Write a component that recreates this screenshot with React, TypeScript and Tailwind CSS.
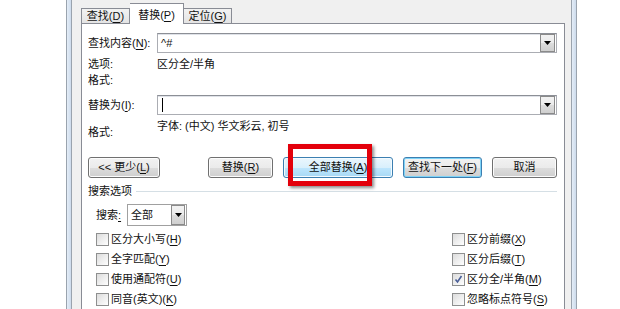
import React from 'react';

const U: React.FC<{ children: React.ReactNode }> = ({ children }) => (
  <span className="underline underline-offset-2">{children}</span>
);

const Arrow = () => (
  <svg width="7" height="4" viewBox="0 0 7 4" className="block">
    <path d="M0 0h7L3.5 4z" fill="#000" />
  </svg>
);

const DropBtn: React.FC<{ className?: string }> = ({ className = '' }) => (
  <div
    className={`flex items-center justify-center border border-[#8a8a8a] bg-[linear-gradient(to_bottom,#f2f2f2_0%,#ebebeb_50%,#dddddd_51%,#cfcfcf_100%)] ${className}`}
  >
    <Arrow />
  </div>
);

const Combo: React.FC<{ value?: React.ReactNode }> = ({ value }) => (
  <div className="flex h-[20px] flex-1 items-center border border-[#abadb3] border-t-[#8c8f96] bg-white shadow-[inset_0_1px_0_#dfe2e8]">
    <div className="flex-1 pl-[3px] leading-[18px]">{value}</div>
    <DropBtn className="mr-px h-[18px] w-[15px]" />
  </div>
);

const Check: React.FC<{ label: React.ReactNode; checked?: boolean }> = ({ label, checked }) => (
  <div className="flex h-[20px] items-center">
    <div className="flex h-[13px] w-[13px] items-center justify-center border border-[#8e8f8f] bg-[linear-gradient(135deg,#dcdcdc,#ffffff)]">
      {checked && (
        <svg width="9" height="9" viewBox="0 0 9 9">
          <path d="M1.5 4.5l2 2.5 4-6" fill="none" stroke="#4a5f97" strokeWidth="1.6" />
        </svg>
      )}
    </div>
    <span className="ml-[2px] leading-[16px]">{label}</span>
  </div>
);

const grayBtn =
  'flex h-[21px] items-center justify-center rounded-[3px] border border-[#707070] bg-[linear-gradient(to_bottom,#f2f2f2_0%,#ebebeb_50%,#dddddd_51%,#cfcfcf_100%)] shadow-[inset_0_0_0_1px_#fcfcfc]';

const Frame = () => (
  <div className="h-full w-[6px] shrink-0 border-x border-x-[#9aa3ae] bg-[linear-gradient(to_right,#e4edf7,#cddbec)]" />
);

export default function App() {
  return (
    <div className="flex h-[309px] w-[620px] overflow-hidden bg-white text-[11px] text-[#111] [font-family:'Liberation_Sans','Noto_Sans_CJK_SC',sans-serif]">
      <div className="w-[66px] shrink-0" />
      <Frame />
      <div className="flex w-[499px] shrink-0 flex-col bg-[#f0f0f0] pl-[9px] pr-[6px]">
        {/* tabs */}
        <div className="relative z-10 flex h-[23px] items-end">
          <div className="flex h-[15px] w-[49px] items-center justify-center border border-b-0 border-[#898c95] bg-[linear-gradient(to_bottom,#f2f2f2,#e4e4e4)] leading-[14px]">
            查找(<U>D</U>)
          </div>
          <div className="-mb-px flex h-[21px] w-[54px] items-start justify-center border border-b-0 border-l-0 border-[#898c95] bg-white pt-[3px] leading-[16px]">
            替换(<U>P</U>)
          </div>
          <div className="flex h-[15px] w-[48px] items-center justify-center border border-b-0 border-l-0 border-[#898c95] bg-[linear-gradient(to_bottom,#f2f2f2,#e4e4e4)] leading-[14px]">
            定位(<U>G</U>)
          </div>
        </div>

        {/* panel */}
        <div className="flex flex-1 flex-col border border-b-0 border-[#898c95] bg-white pl-[6px] pr-[7px] pt-[9px]">
          <div className="flex h-[20px] items-center">
            <div className="w-[69px] shrink-0">
              查找内容(<U>N</U>):
            </div>
            <Combo value="^#" />
          </div>

          <div className="mt-[3px] flex h-[16px] items-center leading-[16px]">
            <div className="w-[69px] shrink-0">选项:</div>
            <div>区分全/半角</div>
          </div>
          <div className="flex h-[16px] items-center leading-[16px]">
            <div className="w-[69px] shrink-0">格式:</div>
          </div>

          <div className="mt-[7px] flex h-[20px] items-center">
            <div className="w-[69px] shrink-0">
              替换为(<U>I</U>):
            </div>
            <Combo value={<span className="ml-[1px] inline-block h-[14px] w-px translate-y-[2px] bg-black" />} />
          </div>

          <div className="mt-[3px] flex h-[22px] items-start leading-[16px]">
            <div className="mt-[6px] w-[69px] shrink-0">格式:</div>
            <div>字体: (中文) 华文彩云, 初号</div>
          </div>

          {/* buttons */}
          <div className="mt-[17px] flex h-[21px] items-center">
            <div className={`${grayBtn} w-[72px]`}>
              &lt;&lt; 更少(<U>L</U>)
            </div>
            <div className={`${grayBtn} ml-[48px] w-[65px]`}>
              替换(<U>R</U>)
            </div>
            <div className="relative ml-[10px] flex h-[21px] w-[110px] items-center justify-center rounded-[3px] border border-[#3c7fb1] bg-[linear-gradient(to_bottom,#eaf6fd_0%,#d9f0fc_50%,#bee6fd_51%,#a7d9f5_100%)] shadow-[inset_0_0_0_1px_#f4fbff]">
              全部替换(<U>A</U>)
              <div className="absolute left-[4px] top-[-14px] h-[42px] w-[84px] border-[5px] border-[#e3000b] shadow-[2px_2px_3px_rgba(0,0,0,0.45)]" />
            </div>
            <div className="ml-[10px] flex h-[21px] w-[79px] items-center justify-center rounded-[3px] border border-[#3c7fb1] bg-[linear-gradient(to_bottom,#f2f2f2_0%,#ebebeb_50%,#dddddd_51%,#cfcfcf_100%)] shadow-[inset_0_0_0_1px_#7ed3f7]">
              查找下一处(<U>F</U>)
            </div>
            <div className={`${grayBtn} ml-[10px] w-[65px]`}>取消</div>
          </div>

          {/* group */}
          <div className="mt-[5px] flex h-[16px] items-center leading-[16px]">
            <span>搜索选项</span>
            <div className="ml-[4px] h-px flex-1 bg-[#d5dfe5]" />
          </div>

          <div className="mt-[5px] flex h-[22px] items-center pl-[8px]">
            <span className="w-[31px]">
              搜索<U>:</U>
            </span>
            <div className="flex h-[22px] w-[60px] items-center border border-[#a0a0a0] bg-white">
              <div className="flex-1 pl-[3px]">全部</div>
              <DropBtn className="mr-px h-[20px] w-[14px]" />
            </div>
          </div>

          <div className="mt-[3px] flex pl-[8px]">
            <div className="flex w-[356px] flex-col">
              <Check label={<>区分大小写(<U>H</U>)</>} />
              <Check label={<>全字匹配(<U>Y</U>)</>} />
              <Check label={<>使用通配符(<U>U</U>)</>} />
              <Check label={<>同音(英文)(<U>K</U>)</>} />
            </div>
            <div className="flex flex-col">
              <Check label={<>区分前缀(<U>X</U>)</>} />
              <Check label={<>区分后缀(<U>T</U>)</>} />
              <Check checked label={<>区分全/半角(<U>M</U>)</>} />
              <Check label={<>忽略标点符号(<U>S</U>)</>} />
            </div>
          </div>
        </div>
      </div>
      <Frame />
      <div className="flex-1" />
    </div>
  );
}
